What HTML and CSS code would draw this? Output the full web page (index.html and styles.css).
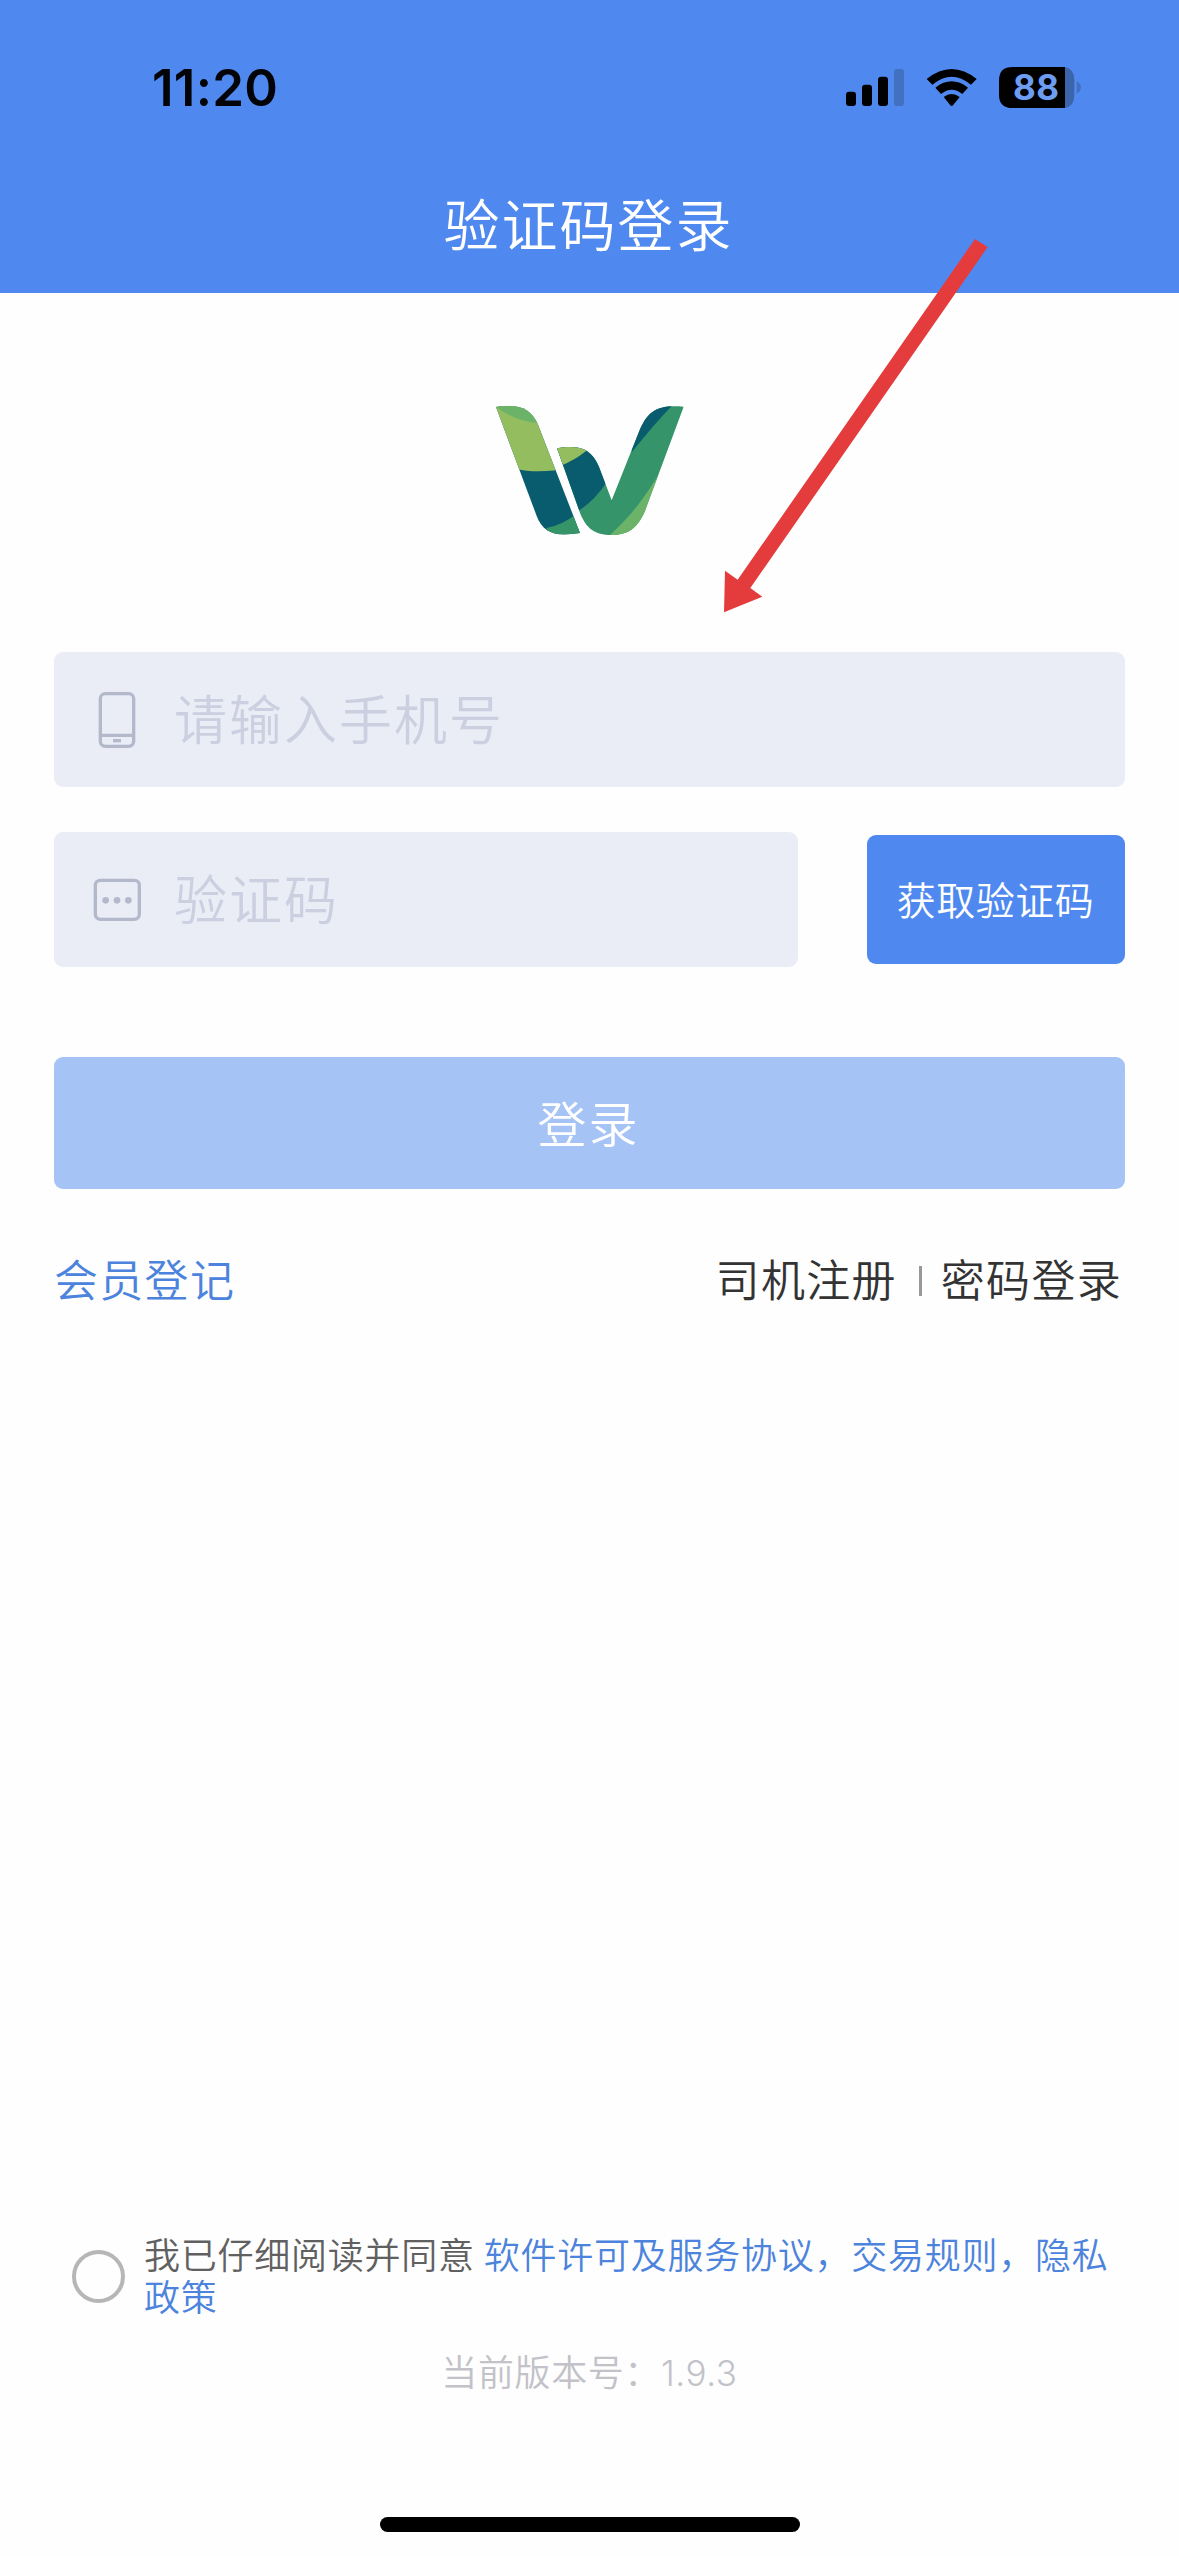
FILE: index.html
```html
<!DOCTYPE html>
<html lang="zh-CN">
<head>
<meta charset="utf-8">
<title>验证码登录</title>
<link rel="stylesheet" href="styles.css">
</head>
<body>
<div class="screen">
  <header class="header">
    <div class="status">
      <span class="time">11:20</span>
      <svg class="status-icons" viewBox="0 0 900 330">
        <rect x="78" y="155" width="30" height="43" rx="9"/>
        <rect x="126" y="134" width="30" height="64" rx="9"/>
        <rect x="174" y="110" width="30" height="88" rx="9"/>
        <rect x="222" y="87" width="30" height="111" rx="9" fill="#4271c1"/>
        <path d="M320 117 Q395 57 470 117 L453 134 Q395 86 337 134Z"/>
        <path d="M346 143 Q395 105 444 143 L427 162 Q395 136 363 162Z"/>
        <path d="M371 171 Q395 153 419 171 L399 196 Q395 200 391 196Z"/>
        <path d="M735 81 Q763 86 763 121 V164 Q763 199 735 204Z" fill="#3b64ab"/>
        <path d="M735 81 H578 Q537 81 537 121 V164 Q537 204 578 204 H735Z"/>
        <path d="M770 124 Q783 130 783 142 Q783 155 770 161Z" fill="#4271c1"/>
        <text class="battery-level" x="648" y="181" text-anchor="middle" textLength="138">88</text>
      </svg>
    </div>
    <h1 class="title">验证码登录</h1>
  </header>

  <main class="content">
    <svg class="logo" viewBox="0 0 660 480">
      <defs>
        <clipPath id="leaf-left"><path d="M48 51 C112 42 151 51 174 104 L300 429 C226 440 191 431 170 378Z"/></clipPath>
        <clipPath id="leaf-right"><path d="M231 175 C294 164 333 174 356 228 L395 331 L477 125 C503 63 531 43 611 50 L494 365 C470 418 442 434 395 435 C342 434 320 415 301 371Z"/></clipPath>
      </defs>
      <g clip-path="url(#leaf-left)">
        <rect x="40" y="40" width="270" height="400" fill="#095c6d"/>
        <path d="M40 40 H310 V228 Q175 255 110 236Z" fill="#94bd5f"/>
        <path d="M48 51 Q105 93 175 99 L160 35 H40Z" fill="#6bb368"/>
        <path d="M200 414 Q252 402 285 374 L310 440 H195Z" fill="#369568"/>
      </g>
      <g clip-path="url(#leaf-right)">
        <rect x="220" y="30" width="400" height="415" fill="#359469"/>
        <path d="M225 160 H380 V276 Q344 333 290 366 L240 227Z" fill="#095c6d"/>
        <path d="M225 165 H325 L317 184 Q283 212 242 227Z" fill="#94bd5f"/>
        <path d="M455 187 Q525 99 583 40 H450Z" fill="#095c6d"/>
        <path d="M387 438 Q452 377 481 335 Q506 302 530 263 V440Z" fill="#6bb368"/>
      </g>
    </svg>

    <form class="form">
      <div class="field">
        <svg class="field-icon" viewBox="0 0 150 180">
          <g fill="none" stroke="#b3b9cb" stroke-width="10">
            <rect x="25" y="11" width="100" height="158" rx="15"/>
            <path d="M26 136H124"/>
            <path d="M63 152H87"/>
          </g>
        </svg>
        <span class="placeholder">请输入手机号</span>
      </div>
      <div class="code-row">
        <div class="field field-code">
          <svg class="field-icon" viewBox="0 0 150 180">
            <rect x="10" y="31" width="132" height="117" rx="15" fill="none" stroke="#b3b9cb" stroke-width="10"/>
            <g fill="#b3b9cb"><circle cx="41" cy="91" r="10"/><circle cx="75" cy="91" r="10"/><circle cx="109" cy="91" r="10"/></g>
          </svg>
          <span class="placeholder">验证码</span>
        </div>
        <button type="button" class="get-code">获取验证码</button>
      </div>
      <button type="button" class="login">登录</button>
    </form>

    <nav class="links">
      <a class="member">会员登记</a>
      <div class="links-right">
        <a>司机注册</a>
        <span class="divider"></span>
        <a>密码登录</a>
      </div>
    </nav>
  </main>

  <footer class="footer">
    <div class="agreement">
      <span class="radio"></span>
      <p class="terms">我已仔细阅读并同意<span class="terms-links">软件许可及服务协议，交易规则，隐私<br>政策</span></p>
    </div>
    <p class="version">当前版本号：<span class="number">1.9.3</span></p>
    <div class="home-indicator"></div>
  </footer>

  <svg class="arrow" viewBox="0 0 960 1230">
    <path d="M825 57 L863 81 L151 1104 L187 1130 L72 1177 L75 1052 L113 1079Z" fill="#e43c3c"/>
  </svg>
</div>
</body>
</html>
```
FILE: styles.css
```css
* {
  box-sizing: border-box;
}

body {
  margin: 0;
  background: #fefefe;
  font-family: "Noto Sans CJK SC", sans-serif;
  font-weight: 350;
}

h1,
p {
  margin: 0;
  font-weight: 350;
}

button {
  border: 0;
  padding: 0;
  font: inherit;
  color: #fff;
}

.screen {
  position: relative;
  display: flex;
  flex-direction: column;
  width: 1179px;
  height: 2556px;
}

.header {
  height: 293px;
  background: #4f89ef;
}

.status {
  display: flex;
  justify-content: space-between;
  height: 150px;
  padding: 40px 59px 0 152px;
}

.time {
  margin-top: 18px;
  font: 600 51px/60px Inter, sans-serif;
  letter-spacing: 0.3px;
  color: #020408;
}

.status-icons {
  width: 300px;
  height: 110px;
}

.battery-level {
  font: 700 105px Inter, sans-serif;
  fill: #6c9df1;
}

.title {
  padding: 32px 2px 0 0;
  font-size: 56px;
  line-height: 80px;
  letter-spacing: 2px;
  text-align: center;
  color: #fff;
}

.content {
  display: flex;
  flex-direction: column;
  padding: 97px 54px 0;
}

.logo {
  width: 220px;
  height: 160px;
  margin-left: 426px;
}

.form {
  display: flex;
  flex-direction: column;
  margin-top: 102px;
}

.field {
  display: flex;
  align-items: center;
  gap: 29px;
  height: 135px;
  padding-left: 38px;
  border-radius: 9px;
  background: #eaedf6;
}

.field-icon {
  width: 50px;
  height: 60px;
}

.placeholder {
  padding-left: 3px;
  font-size: 53px;
  line-height: 78px;
  letter-spacing: 2px;
  color: #cbcfdf;
  margin-top: -6px;
}

.code-row {
  display: flex;
  align-items: center;
  justify-content: space-between;
  margin-top: 45px;
}

.field-code {
  width: 744px;
}

.get-code {
  width: 258px;
  height: 129px;
  padding: 0 1px 3px 0;
  border-radius: 9px;
  background: #4f89ef;
  font-size: 39px;
  letter-spacing: 0.5px;
}

.login {
  height: 132px;
  margin-top: 90px;
  padding: 0 2px 4px 0;
  border-radius: 9px;
  background: #a5c3f5;
  font-size: 49px;
  letter-spacing: 2px;
}

.links {
  display: flex;
  justify-content: space-between;
  align-items: center;
  margin-top: 57px;
  padding: 0 3px 0 0;
  font-size: 44px;
  line-height: 64px;
  letter-spacing: 1.3px;
  color: #333;
}

.member {
  color: #4c83dc;
}

.links-right {
  display: flex;
  align-items: center;
}

.divider {
  width: 3px;
  height: 30px;
  margin: 6px 19px 0 22px;
  background: #999;
}

.footer {
  display: flex;
  flex-direction: column;
  margin-top: auto;
  padding-bottom: 24px;
}

.agreement {
  display: flex;
  align-items: center;
  gap: 19px;
  padding-left: 72px;
}

.radio {
  width: 53px;
  height: 53px;
  border: 4px solid #b6b6b6;
  border-radius: 50%;
}

.terms {
  margin: -5px 0 0;
  font-size: 36px;
  line-height: 42px;
  letter-spacing: 0.75px;
  color: #606060;
  white-space: nowrap;
}

.terms-links {
  margin-left: 9px;
  color: #4c83dc;
}

.version {
  margin-top: 28px;
  font-size: 36px;
  line-height: 52px;
  letter-spacing: 0.6px;
  text-align: center;
  color: #c2c2c8;
}

.number {
  font-family: Inter, sans-serif;
  font-size: 35px;
}

.home-indicator {
  width: 420px;
  height: 15px;
  margin: 118px 379px 0 380px;
  border-radius: 8px;
  background: #000;
}

.arrow {
  position: absolute;
  left: 700px;
  top: 220px;
  width: 320px;
  height: 410px;
}
```
